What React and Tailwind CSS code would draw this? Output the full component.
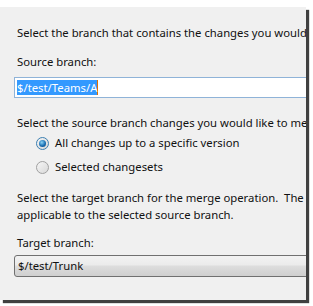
export default function App() {
  const font = { fontFamily: '"Noto Sans", "Open Sans", sans-serif' };
  return (
    <div className="w-[313px] h-[306px] bg-white overflow-hidden relative" style={font}>
      <div className="absolute left-0 top-[7px] w-[306px] h-[293px] bg-[#f0f0f0] shadow-[3px_3px_1px_rgba(0,0,0,0.75)] overflow-hidden text-[11.3px] leading-[16px] text-[#111111]">
        <div className="pl-[17px] pt-[18px] whitespace-nowrap">Select the branch that contains the changes you would like to merge.</div>
        <div className="pl-[17px] mt-[13px] whitespace-nowrap">Source branch:</div>
        <div className="ml-[14px] mt-[7px] h-[21px] w-[320px] bg-white border border-[#8fb3d8] flex items-center pl-[2px]">
          <span className="bg-[#3399ff] text-white leading-[15px] border-r border-[#e07000]">$/test/Teams/A</span>
        </div>
        <div className="pl-[17px] mt-[17px] whitespace-nowrap">Select the source branch changes you would like to merge:</div>
        <div className="pl-[36px] mt-[4px] flex items-center h-[16px] gap-[6px] whitespace-nowrap">
          <span className="w-[13px] h-[13px] rounded-full border border-[#3c7fb1] bg-gradient-to-br from-[#f4f4f4] to-[#d8d8d8] flex items-center justify-center">
            <span className="w-[7px] h-[7px] rounded-full bg-[radial-gradient(circle_at_40%_35%,#8ad2f5,#1a6fb3_55%,#0b3f73)]"></span>
          </span>
          <span>All changes up to a specific version</span>
        </div>
        <div className="pl-[36px] mt-[8px] flex items-center h-[16px] gap-[6px] whitespace-nowrap">
          <span className="w-[13px] h-[13px] rounded-full border border-[#a0a0a0] bg-gradient-to-br from-[#f6f6f6] to-[#d8d8d8]"></span>
          <span>Selected changesets</span>
        </div>
        <div className="pl-[17px] mt-[15px] whitespace-nowrap">Select the target branch for the merge operation.&nbsp; The drop-down list shows</div>
        <div className="pl-[17px] mt-[1px] whitespace-nowrap">applicable to the selected source branch.</div>
        <div className="pl-[17px] mt-[12px] whitespace-nowrap">Target branch:</div>
        <div className="ml-[14px] mt-[4px] h-[22px] w-[320px] rounded-[3px] border border-[#707070] bg-[linear-gradient(#f2f2f2_0%,#ebebeb_45%,#dddddd_50%,#cfcfcf_100%)] flex items-center pl-[3px]">
          <span>$/test/Trunk</span>
        </div>
      </div>
    </div>
  );
}
